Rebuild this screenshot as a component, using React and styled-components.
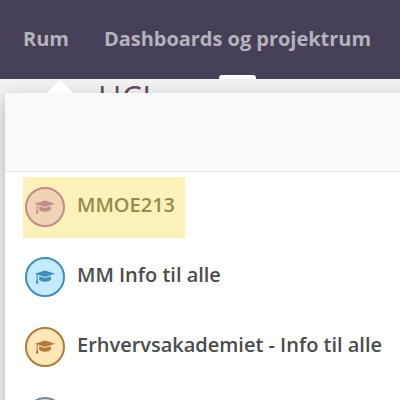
import React from 'react';
import styled, { createGlobalStyle } from 'styled-components';

const GlobalStyle = createGlobalStyle`
  * { box-sizing: border-box; }
  body { margin: 0; background: #f1f1f1; font-family: "Open Sans", sans-serif; }
`;

const Page = styled.div`
  position: relative;
  width: 400px;
  height: 400px;
  overflow: hidden;
  background: #f1f1f1;
`;

const NavBar = styled.nav`
  position: relative;
  z-index: 2;
  display: flex;
  gap: 35px;
  height: 79px;
  padding: 25px 0 0 23px;
  background: #454058;
`;

const NavItem = styled.span`
  font-size: 20px;
  line-height: 27px;
  font-weight: 700;
  letter-spacing: -0.03px;
  color: #b4b2bb;
  white-space: nowrap;
`;

const ActiveTab = styled.span`
  position: absolute;
  left: 219px;
  bottom: 0;
  width: 37px;
  height: 4px;
  border-radius: 3px 3px 0 0;
  background: #fff;
`;

const Heading = styled.h1`
  margin: 0;
  padding: 0 0 0 98px;
  font-size: 32px;
  line-height: 38px;
  font-weight: 400;
  letter-spacing: 0.4px;
  color: #654a62;
`;

const Menu = styled.section`
  position: absolute;
  top: 93px;
  left: 5px;
  width: 460px;
  height: 340px;
  background: #fff;
  box-shadow: 0 6px 15px rgba(0, 0, 0, 0.26);
`;

const Pointer = styled.span`
  position: absolute;
  top: -13px;
  left: 42px;
  border: solid transparent;
  border-width: 0 13.5px 13px;
  border-bottom-color: #fff;
`;

const MenuHeader = styled.header`
  height: 79px;
  background: #f9f9f9;
  border-bottom: 1px solid #e7e7e7;
`;

const RoomList = styled.ul`
  display: flex;
  flex-direction: column;
  gap: 9px;
  margin: 0;
  padding: 5px 0 0 18px;
  list-style: none;
`;

const Room = styled.li`
  display: flex;
  align-items: flex-start;
  gap: 12px;
  align-self: flex-start;
  width: ${(p) => (p.$marked ? '162px' : 'auto')};
  height: 61px;
  padding: 10px 0 0 2px;
  color: ${(p) => (p.$marked ? '#938b4f' : '#4c4c4c')};
  background: ${(p) => (p.$marked ? '#fcf2b9' : 'transparent')};
`;

const Avatar = styled.span`
  display: flex;
  align-items: center;
  justify-content: center;
  width: 40px;
  height: 40px;
  border: 2px solid ${(p) => p.$line};
  border-radius: 50%;
  color: ${(p) => p.$line};
  background: ${(p) => p.$fill};
`;

const RoomName = styled.span`
  padding-top: 4px;
  font-size: 20px;
  line-height: 27px;
  font-weight: 600;
  letter-spacing: -0.01px;
  white-space: nowrap;
`;

function CapIcon() {
  return (
    <svg width="22" height="16" viewBox="0 0 22 16" fill="currentColor">
      <path d="M.8 4.7 11 1.5l10.2 3.2L11 8z" />
      <path d="M5.2 7.2 11 9l5.9-1.8v3.6c-1.2 1.3-3.2 1.9-5.9 1.9s-4.8-.6-5.8-1.9z" />
      <path d="M2.6 5.2h1.1v5l.9 4.4H1.9l.7-4.4z" />
    </svg>
  );
}

const rooms = [
  { name: 'MMOE213', line: '#c18d88', fill: '#f1d2b3', marked: true },
  { name: 'MM Info til alle', line: '#408ebb', fill: '#c4ebff' },
  { name: 'Erhvervsakademiet - Info til alle', line: '#b27a3c', fill: '#ffe7b7' },
  { name: '', line: '#708896', fill: '#d3dfe5' },
];

export default function App() {
  return (
    <Page>
      <GlobalStyle />
      <NavBar>
        <NavItem>Rum</NavItem>
        <NavItem>Dashboards og projektrum</NavItem>
        <ActiveTab />
      </NavBar>
      <Heading>UCL</Heading>
      <Menu>
        <Pointer />
        <MenuHeader />
        <RoomList>
          {rooms.map((room) => (
            <Room key={room.line} $marked={room.marked}>
              <Avatar $line={room.line} $fill={room.fill}>
                <CapIcon />
              </Avatar>
              <RoomName>{room.name}</RoomName>
            </Room>
          ))}
        </RoomList>
      </Menu>
    </Page>
  );
}
